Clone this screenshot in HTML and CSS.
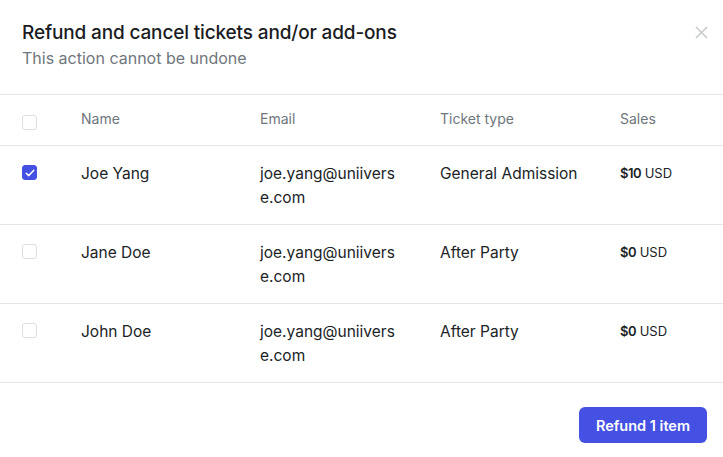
FILE: index.html
```html
<!DOCTYPE html>
<html>
<head>
<meta charset="utf-8">
<link rel="stylesheet" href="styles.css">
</head>
<body>
<div class="modal">
  <div class="head">
    <div class="titles">
      <div class="title">Refund and cancel tickets and/or add-ons</div>
      <div class="subtitle">This action cannot be undone</div>
    </div>
    <button class="close" aria-label="Close">
      <svg width="13" height="13" viewBox="0 0 13 13"><path d="M1 1L12 12M12 1L1 12" stroke="#c6cacd" stroke-width="1.6" fill="none"/></svg>
    </button>
  </div>
  <div class="table">
    <div class="row header">
      <div class="cell check"><span class="box"></span></div>
      <div class="cell">Name</div>
      <div class="cell">Email</div>
      <div class="cell">Ticket type</div>
      <div class="cell">Sales</div>
    </div>
    <div class="row">
      <div class="cell check"><span class="box checked"><svg width="10" height="8" viewBox="0 0 10 8"><path d="M1.2 4.2L3.8 6.6L8.8 1.2" stroke="#fff" stroke-width="1.5" fill="none" stroke-linecap="round" stroke-linejoin="round"/></svg></span></div>
      <div class="cell">Joe Yang</div>
      <div class="cell email">joe.yang@uniiverse.com</div>
      <div class="cell">General Admission</div>
      <div class="cell sales"><b>$10</b> USD</div>
    </div>
    <div class="row">
      <div class="cell check"><span class="box"></span></div>
      <div class="cell">Jane Doe</div>
      <div class="cell email">joe.yang@uniiverse.com</div>
      <div class="cell">After Party</div>
      <div class="cell sales"><b>$0</b> USD</div>
    </div>
    <div class="row">
      <div class="cell check"><span class="box"></span></div>
      <div class="cell">John Doe</div>
      <div class="cell email">joe.yang@uniiverse.com</div>
      <div class="cell">After Party</div>
      <div class="cell sales"><b>$0</b> USD</div>
    </div>
  </div>
  <div class="foot">
    <button class="primary">Refund 1 item</button>
  </div>
</div>
</body>
</html>
```

FILE: styles.css
```css
* { box-sizing: border-box; }
html, body { margin: 0; padding: 0; background: #fff; }
body {
  font-family: Inter, "Noto Sans", sans-serif;
  color: #202326;
  width: 723px;
  height: 457px;
  overflow: hidden;
}
.modal { display: flex; flex-direction: column; }
.head {
  display: flex;
  justify-content: space-between;
  align-items: flex-start;
  padding: 21px 15px 0 22px;
  height: 95px;
  border-bottom: 1px solid #e6e6e6;
}
.title {
  font-size: 19px;
  font-weight: 500;
  line-height: 24px;
  color: #1a1c1f;
  letter-spacing: -0.15px;
}
.subtitle {
  font-size: 16px;
  line-height: 20px;
  color: #6f767c;
  margin-top: 3px;
}
.close {
  border: 0;
  background: none;
  padding: 0;
  margin-top: 5px;
  width: 13px;
  height: 13px;
  display: flex;
}
.row {
  display: grid;
  grid-template-columns: 59px 179px 180px 180px 1fr;
  padding: 16px 0 14px 22px;
  border-bottom: 1px solid #e6e6e6;
  font-size: 15.5px;
  line-height: 24px;
}
.row.header {
  font-size: 14px;
  color: #6f767c;
  line-height: 18px;
  padding: 15px 0 17px 22px;
}
.cell.check { display: flex; align-items: flex-start; padding-top: 3px; }
.header .cell.check { height: 18px; padding-top: 5px; }
.box {
  flex: none;
  width: 15px;
  height: 15px;
  border: 1px solid #dcdfe2;
  border-radius: 3px;
  display: flex;
  align-items: center;
  justify-content: center;
  background: #fff;
}
.box.checked { background: #4451e2; border-color: #4451e2; }
.email { word-break: break-all; padding-right: 36px; }
.sales { font-size: 13px; line-height: 22px; }
.sales b { font-weight: 600; letter-spacing: -0.5px; }
.foot {
  display: flex;
  justify-content: flex-end;
  padding: 24px 16px 0 0;
}
.primary {
  font-family: Inter, "Noto Sans", sans-serif;
  background: #4451e2;
  color: #fff;
  border: 0;
  border-radius: 6px;
  height: 36px;
  padding: 0 17px;
  font-size: 14.5px;
  font-weight: 600;
}
```
